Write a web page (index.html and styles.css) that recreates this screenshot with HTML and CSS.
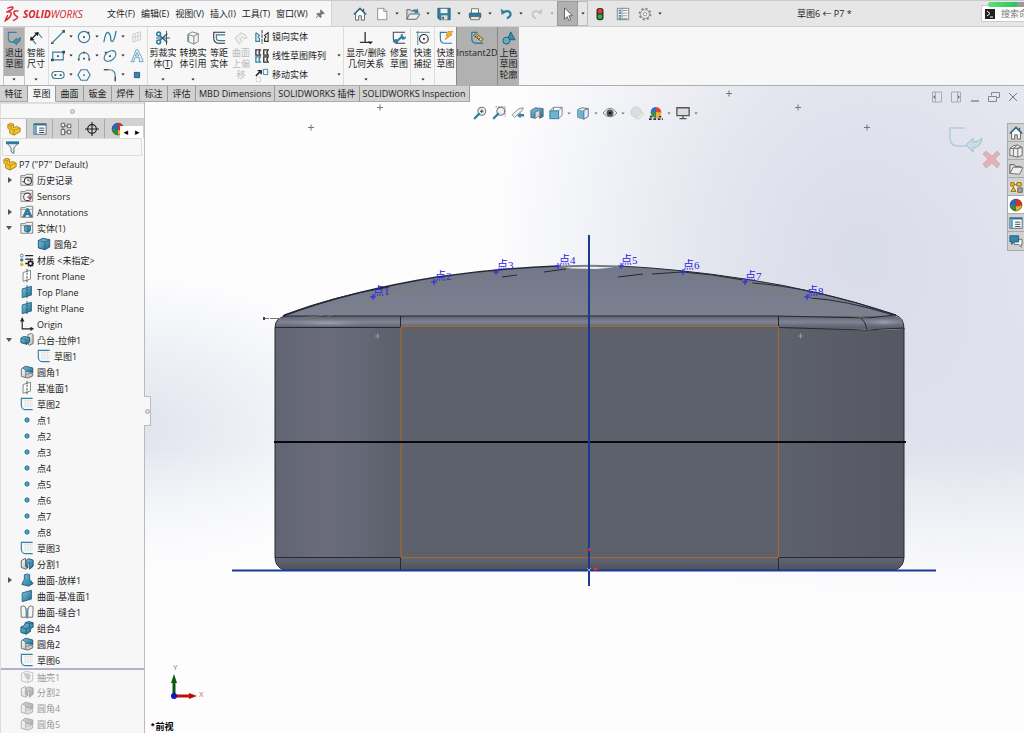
FILE: index.html
```html
<!DOCTYPE html>
<html lang="zh-CN">
<head>
<meta charset="utf-8">
<title>SOLIDWORKS - P7</title>
<link rel="stylesheet" href="styles.css">
</head>
<body>
<svg class="defs" aria-hidden="true">
  <defs>
    <linearGradient id="blue" x1="0" y1="0" x2="1" y2="1"><stop offset="0" stop-color="#7fc4de"/><stop offset="1" stop-color="#1d6c92"/></linearGradient>
    <linearGradient id="grey" x1="0" y1="0" x2="1" y2="1"><stop offset="0" stop-color="#fff"/><stop offset="1" stop-color="#b5b5b5"/></linearGradient>
  </defs>
  <symbol id="part" viewBox="0 0 16 16"><path d="M1 3l3-1.500 3.500 1v4L11 5l4 2v4l-7 4-5-2.500V9L1 7z" fill="#f4c52c" stroke="#a77a10"/><path d="M1 3l3.500 1.500 3-2M4.500 4.500V8L8 9.500l7-2.500M8 9.500V15" fill="none" stroke="#b98c18"/></symbol>
  <symbol id="folder" viewBox="0 0 16 16"><path d="M1 14V3h5l1-1.500h7.500V14z" fill="#f2f2f2" stroke="#777"/><path d="M1 5h13.500" stroke="#999"/></symbol>
  <symbol id="history" viewBox="0 0 16 16"><use href="#folder"/><circle cx="9" cy="9" r="4" fill="#fff" stroke="#333" stroke-width="1.300"/><path d="M9 6.500V9h2" fill="none" stroke="#333"/><path d="M2 9h4L4 11z" fill="#217aa3"/></symbol>
  <symbol id="sensor" viewBox="0 0 16 16"><use href="#folder"/><circle cx="8.500" cy="9" r="4.300" fill="#fff" stroke="#444" stroke-width="1.200"/><path d="M8 10l3-3" stroke="#333"/><circle cx="11" cy="10" r="1.500" fill="#d22"/></symbol>
  <symbol id="annot" viewBox="0 0 16 16"><use href="#folder"/><path d="M3 13.500L7.500 4h2L14 13.500h-3l-1-2.500H7l-1 2.500zM7.500 9.200h2L8.500 7z" fill="#2c7ea5" stroke="#195673" stroke-width=".5" fill-rule="evenodd"/></symbol>
  <symbol id="bodies" viewBox="0 0 16 16"><use href="#folder"/><path d="M5 6l3-1 4 1v5l-3 2-4-1.500z" fill="url(#blue)" stroke="#195673" stroke-width=".7"/><path d="M5 6l4 1v6M9 7l3-1" stroke="#195673" stroke-width=".6" fill="none"/></symbol>
  <symbol id="cube" viewBox="0 0 16 16"><path d="M1.500 4l5-2.500 8 1.500v8.500L9 14.500l-7.500-2z" fill="url(#blue)" stroke="#17536e"/><path d="M1.500 4L9 6v8.500M9 6l5.500-3" stroke="#17536e" stroke-width=".7" fill="none"/></symbol>
  <symbol id="material" viewBox="0 0 16 16"><circle cx="2" cy="3" r="1.700" fill="#fff" stroke="#666"/><circle cx="2" cy="8" r="2" fill="#3187ad"/><circle cx="2" cy="13" r="2" fill="#e4b21b"/><path d="M6 3h9M6 7h9M6 12h2" stroke="#222" stroke-width="1.700"/><circle cx="12" cy="12" r="2.500" fill="#fff" stroke="#222" stroke-width="2"/><path d="M12 7.500v9M7.500 12h9M9 9l6 6M15 9l-6 6" stroke="#222" stroke-dasharray="1.500 6" stroke-width="1.400"/></symbol>
  <symbol id="plane" viewBox="0 0 16 16"><path d="M3.500 4L12 1.500v10L3.500 14z" fill="#fff" stroke="#777"/><path d="M8 0v16" stroke="#444" stroke-dasharray="3 1"/></symbol>
  <symbol id="planeblue" viewBox="0 0 16 16"><path d="M2.500 4.500L13 1.500v10L2.500 14.500z" fill="url(#blue)" stroke="#205f7d"/><path d="M8 0v16" stroke="#1b4b63" stroke-dasharray="3 1"/></symbol>
  <symbol id="surface" viewBox="0 0 16 16"><path d="M2.500 4.500L13 1.500v10L2.500 14.500z" fill="url(#blue)" stroke="#205f7d"/></symbol>
  <symbol id="origin" viewBox="0 0 16 16"><path d="M2.500 3v10.500H13" fill="none" stroke="#222" stroke-width="1.300"/><path d="M2.500 0L0 5h5zM16 13.500L12 11v5z" fill="#222"/></symbol>
  <symbol id="extrude" viewBox="0 0 16 16"><path d="M9 2l4-1.500 2 1.500v10l-4 2-2-1.500z" fill="url(#grey)" stroke="#666"/><path d="M1 6l3-2 7 1v5l-3 3-7-2z" fill="url(#blue)" stroke="#17536e"/><path d="M1 6l6 1.500v5" fill="none" stroke="#17536e" stroke-width=".6"/></symbol>
  <symbol id="sketch" viewBox="0 0 16 16"><path d="M5 4h10M5 7h10M5 10h10M6 2v10M9 2v10M12 2v10" stroke="#ddd" stroke-width=".7"/><path d="M14.500 1.500H1.500V9c0 3 2 5.500 5 5.500h8" fill="none" stroke="#3281a6" stroke-width="1.300"/></symbol>
  <symbol id="fillet" viewBox="0 0 16 16"><path d="M1.500 4.500l5-3 8 2v9L9 15l-7.500-2z" fill="url(#grey)" stroke="#666"/><path d="M6.500 7.500Q7 5 3 3.500L6.500 1.500l8 2v5z" fill="url(#blue)" stroke="#1b5e7d" stroke-width=".8"/><path d="M6.500 7.500V14M6.500 11l8-2" stroke="#777" fill="none"/></symbol>
  <symbol id="dot" viewBox="0 0 16 16"><circle cx="8" cy="8" r="2.500" fill="#45a0c7" stroke="#195a7b" stroke-width=".8"/></symbol>
  <symbol id="split" viewBox="0 0 16 16"><path d="M1.500 4l5-2.500V11L9 12l-2 2-5.500-2z" fill="url(#grey)" stroke="#555"/><path d="M7 4l3-2 5 1.500v7L11 14V6L9 7v5l-2-1z" fill="url(#blue)" stroke="#17536e"/></symbol>
  <symbol id="loft" viewBox="0 0 16 16"><path d="M5 2l3-1 3 1v5l4 5-5 3-8-2 3-6z" fill="url(#blue)" stroke="#205f7d"/><path d="M5 2l4 1 2-1M9 3v6l1 6" fill="none" stroke="#4a9dbd" stroke-width=".5"/></symbol>
  <symbol id="knit" viewBox="0 0 16 16"><path d="M1 2q3-2 5 0l1 4v8H1.500zM15 2q-3-2-5 0L9 6v8h5.500z" fill="#f5f5f5" stroke="#666"/><path d="M8 4v11" stroke="#237ca6" stroke-width="2" stroke-dasharray="1 1"/></symbol>
  <symbol id="combine" viewBox="0 0 16 16"><path d="M6 2l4-1.500L15 2v5l-3 2v3l-5 3-6-2V7l4-2z" fill="url(#blue)" stroke="#17536e"/><path d="M1 7l6 2 4-2M7 9v6M6 2l5 1 4-1M11 3v5" fill="none" stroke="#17536e" stroke-width=".8"/></symbol>
  <symbol id="shell" viewBox="0 0 16 16"><path d="M1.500 4l5-2.500 8 1.500v9L9 14.500l-7.500-2z" fill="#eee" stroke="#888"/><path d="M5 4l6 1v5L7 9z" fill="#aaa" stroke="#888"/><path d="M9 6v8" stroke="#888"/></symbol>
  <symbol id="home" viewBox="0 0 16 16"><path d="M3 7v8h3.500v-5h3v5H13V7L8 2.500z" fill="#fff" stroke="#555"/><path d="M1 8.500l7-7 7 7" fill="none" stroke="#26698a" stroke-width="1.800"/><path d="M12 2v3" stroke="#555" stroke-width="1.500"/></symbol>
  <symbol id="ball" viewBox="0 0 16 16"><circle cx="8" cy="8" r="7" fill="#e3b31d"/><path d="M8 1a7 7 0 0 0-7 7q3 1.500 7 1z" fill="#2f62bf"/><path d="M8 1a7 7 0 0 1 7 7q-3 2-7 1z" fill="#d93025"/><path d="M1 8a7 7 0 0 0 7 7V9Q4 9.500 1 8z" fill="#25913b"/><circle cx="8" cy="8" r="6.800" fill="none" stroke="#444" stroke-width=".6"/></symbol>
  <symbol id="props" viewBox="0 0 16 16"><rect x="1" y="2" width="14" height="12" fill="#fff" stroke="#446779"/><path d="M1 3h14" stroke="#287497" stroke-width="2"/><path d="M3 4v10" stroke="#5fa5c3" stroke-width="3"/><path d="M7 7h6M7 9.500h6M7 12h6" stroke="#333"/></symbol>
  <symbol id="magnify" viewBox="0 0 16 16"><circle cx="10" cy="6" r="4.500" fill="#e7f1f5" stroke="#777" stroke-width="1.200"/><path d="M7 9l-5 5" stroke="#347f9f" stroke-width="2.600" stroke-linecap="round"/></symbol>
  <symbol id="arrow" viewBox="0 0 6 4"><path d="M0.500 0.500h5L3 3.500z" fill="currentColor"/></symbol>
</svg>

<div class="app">
  <header class="topbar">
    <div class="brand-area">
      <svg class="logo" viewBox="0 0 16 18" fill="none" stroke="#d8232e" stroke-width="1.500"><path d="M3 3.500Q9 1 9 3T2 7.500Q8 6.500 7 10T1 16.500L3.500 10.500M15 6.500Q10 5.500 10 8t3 4-4 4.500"/></svg>
      <div class="brand"><b>SOLID</b>WORKS</div>
      <nav class="menu">
        <button>文件(F)</button><button>编辑(E)</button><button>视图(V)</button><button>插入(I)</button><button>工具(T)</button><button>窗口(W)</button>
      </nav>
      <svg class="pin" viewBox="0 0 12 12"><path d="M7 1l4 4-1 1-1-.5-2 2 .5 2-1 1L2 6l1-1 2 .5 2-2-.5-1zM4 8l-3 3" fill="#777" stroke="#777"/></svg>
    </div>
    <div class="quick">
      <button class="home" aria-label="主页"><svg class="i16"><use href="#home"/></svg></button>
      <button class="drop" aria-label="新建"><svg class="i16" viewBox="0 0 16 16"><path d="M3 1.500h7l3.500 3.500v9.500H3z" fill="#fcfcfc" stroke="#888"/><path d="M10 1.500V5h3.500" fill="none" stroke="#888"/></svg><svg class="ar"><use href="#arrow"/></svg></button>
      <button class="drop" aria-label="打开"><svg class="i16" viewBox="0 0 16 16"><path d="M1 14V3h4l1 1.500h7V7" fill="#ddd" stroke="#555"/><path d="M1 14L4 8h12l-4 6z" fill="#eee" stroke="#555"/><path d="M7 6q1-5 5-3l1-1.500 1.500 5-5 .5 1-2q-2-1-3.500 1z" fill="#2c7da2"/></svg><svg class="ar"><use href="#arrow"/></svg></button>
      <button class="drop" aria-label="保存"><svg class="i16" viewBox="0 0 16 16"><path d="M1 1.500h14v13H3L1 12.500z" fill="#357f9f" stroke="#215970"/><path d="M4 2h8v5H4z" fill="#f1f1f1"/><path d="M5 9.500h7v5H5z" fill="#ddd"/><path d="M6 11h2v3H6z" fill="#555"/></svg><svg class="ar"><use href="#arrow"/></svg></button>
      <button class="drop" aria-label="打印"><svg class="i16" viewBox="0 0 16 16"><path d="M4 7V2h8v5" fill="#fff" stroke="#666"/><path d="M1.500 7h13v5h-13z" fill="#347c9e" stroke="#225b75"/><path d="M3 11h10v3.500H3z" fill="#eee" stroke="#666"/></svg><svg class="ar"><use href="#arrow"/></svg></button>
      <button class="drop" aria-label="撤消"><svg class="i16" viewBox="0 0 16 16"><path d="M5 6q6-3 8 1 1 4-4 6" fill="none" stroke="#347f9f" stroke-width="2.600"/><path d="M2 2l1 7 5-3z" fill="#347f9f"/></svg><svg class="ar"><use href="#arrow"/></svg></button>
      <button class="drop dim" aria-label="重做" disabled><svg class="i16" viewBox="0 0 16 16"><path d="M11 6Q5 3 3 7q-1 4 4 6" fill="none" stroke="#c5c5c5" stroke-width="2"/><path d="M14 2l-1 7-5-3z" fill="#c5c5c5"/></svg><svg class="ar"><use href="#arrow"/></svg></button>
      <button class="select" aria-label="选择"><svg class="i16" viewBox="0 0 16 16"><path d="M4 1l9 9H9l2 4.500-2 1L7 11l-3 3z" fill="#fff" stroke="#555"/></svg></button>
      <button class="selectdrop" aria-label="选择方式"><svg class="ar"><use href="#arrow"/></svg></button>
      <button class="wide" aria-label="重建模型"><svg class="i16" viewBox="0 0 16 16"><rect x="4" y="1" width="8" height="14" rx="3" fill="#333"/><circle cx="8" cy="4.800" r="2.700" fill="#e03b30"/><circle cx="8" cy="11" r="2.700" fill="#2eb44a"/></svg></button>
      <button class="wide" aria-label="文件属性"><svg class="i16" viewBox="0 0 16 16"><path d="M1.500 1.500h13v13h-13z" fill="#fff" stroke="#777"/><path d="M4.500 3v11" stroke="#3a86aa" stroke-width="3" stroke-dasharray="2 1"/><path d="M8 4h5M8 7h5M8 10h5M8 13h5M7 1.500v13" stroke="#888"/></svg></button>
      <button class="drop gear" aria-label="选项"><svg class="i16" viewBox="0 0 16 16"><circle cx="8" cy="8" r="6.300" fill="none" stroke="#888" stroke-width="2" stroke-dasharray="2.500 2.400"/><circle cx="8" cy="8" r="5" fill="#eee" stroke="#888"/><circle cx="8" cy="8" r="2" fill="#fff" stroke="#888"/></svg><svg class="ar"><use href="#arrow"/></svg></button>
    </div>
    <h1 class="title">草图6 ← P7 *</h1>
    <div class="searchwrap"><div class="progress"></div><label class="search"><svg viewBox="0 0 10 10"><path d="M0 0h10v10H0z" fill="#222"/><path d="M2 2l3 2.500L2 7M5 8h3" stroke="#fff" fill="none"/></svg><input type="text" placeholder="搜索命令" aria-label="搜索命令"></label></div>
  </header>

  <section class="ribbon">
    <button class="tool w22 exit"><svg class="i16" viewBox="0 0 16 16"><path d="M11 1.500H1.500V8q0 5 5 5H8" fill="none" stroke="#347f9f" stroke-width="1.300"/><path d="M7 12l4-4v2q3 0 4-3 1 6-4 7v2z" fill="#3f91b4" stroke="#246783" stroke-width=".7"/></svg><span>退出<br>草图</span><svg class="ar"><use href="#arrow"/></svg></button>
    <button class="tool w22"><svg class="i16" viewBox="0 0 16 16"><path d="M3 9l5 6M10 2l5 6" stroke="#347f9f" stroke-width="1.300"/><path d="M2 10L10 2" stroke="#222" stroke-width="1.500"/><path d="M1 11l1-5 4 4zM11 1L6 2l4 4z" fill="#222"/></svg><span>智能<br>尺寸</span><svg class="ar"><use href="#arrow"/></svg></button>
    <div class="shapes">
      <button aria-label="直线"><svg class="i16" viewBox="0 0 16 16"><path d="M2 14L14 2" stroke="#347f9f" stroke-width="1.300"/><path d="M0 14h3v2H0zM13 0h3v3h-3z" fill="#555"/></svg><svg class="ar"><use href="#arrow"/></svg></button>
      <button aria-label="圆"><svg class="i16" viewBox="0 0 16 16"><circle cx="8" cy="8" r="6.500" fill="none" stroke="#347f9f" stroke-width="1.300"/><path d="M7 7h2v2H7zM12 2h2v2h-2z" fill="#444"/></svg><svg class="ar"><use href="#arrow"/></svg></button>
      <button aria-label="样条曲线"><svg class="i16" viewBox="0 0 16 16"><path d="M1 14Q3 1 6 3t3 9q3 5 6-11" fill="none" stroke="#347f9f" stroke-width="1.500"/></svg><svg class="ar"><use href="#arrow"/></svg></button>
      <button aria-label="基准面" disabled><svg class="i16" viewBox="0 0 16 16"><path d="M3 5l9-3v9l-9 3zM3 9l9-3M6 4v9M9 3v9" fill="none" stroke="#ccc"/></svg></button>
      <button aria-label="矩形"><svg class="i16" viewBox="0 0 16 16"><path d="M2 3.500h12v9H2z" fill="none" stroke="#347f9f" stroke-width="1.300"/><path d="M0 11h3v3H0zM13 2h3v3h-3zM7 7h2v2H7z" fill="#444"/></svg><svg class="ar"><use href="#arrow"/></svg></button>
      <button aria-label="圆弧"><svg class="i16" viewBox="0 0 16 16"><path d="M2 12q0-8 6-8t6 8" fill="none" stroke="#347f9f" stroke-width="1.400"/><path d="M1 11h2v2H1zM13 11h2v2h-2zM7 10h2v2H7zM7 3h2v2H7z" fill="#444"/></svg><svg class="ar"><use href="#arrow"/></svg></button>
      <button aria-label="椭圆"><svg class="i16" viewBox="0 0 16 16"><ellipse cx="8" cy="8" rx="7.500" ry="5" transform="rotate(-38 8 8)" fill="none" stroke="#347f9f" stroke-width="1.300"/><path d="M7 7h2v2H7zM2 3h2v2H2z" fill="#444"/></svg><svg class="ar"><use href="#arrow"/></svg></button>
      <button aria-label="文字"><svg class="i16" viewBox="0 0 16 16"><path d="M1 14.500h4v-1L4.500 13l1-3h5l1 3-1 .5v1H15v-1L9 1H7L2 13.500zM6 8l2-4 2 4z" fill="#eef8fb" stroke="#5c9ebc" fill-rule="evenodd"/></svg></button>
      <button aria-label="槽口"><svg class="i16" viewBox="0 0 16 16"><rect x="1" y="4" width="14" height="8" rx="4" fill="none" stroke="#347f9f" stroke-width="1.300"/><path d="M4 7h2v2H4zM10 7h2v2h-2z" fill="#444"/></svg><svg class="ar"><use href="#arrow"/></svg></button>
      <button aria-label="多边形"><svg class="i16" viewBox="0 0 16 16"><path d="M4.500 2h7L15 8l-3.500 6h-7L1 8z" fill="none" stroke="#347f9f" stroke-width="1.300"/><path d="M7 7h2v2H7z" fill="#777"/></svg></button>
      <button aria-label="圆角"><svg class="i16" viewBox="0 0 16 16"><path d="M1 2h6q7 0 7 7v6" fill="none" stroke="#347f9f" stroke-width="1.300"/><path d="M1 2h5M14 10v5" stroke="#444" stroke-width="1.300"/></svg><svg class="ar"><use href="#arrow"/></svg></button>
      <button aria-label="点"><svg class="i16" viewBox="0 0 16 16"><path d="M5 5h6v6H5z" fill="#3488ad" stroke="#195673"/></svg></button>
    </div>
    <button class="tool w30"><svg class="i16" viewBox="0 0 16 16"><path d="M4 5l9 8M4 11l9-8" stroke="#287da4" stroke-width="1.600"/><path d="M0 8h16M12 0v16" stroke="#444"/><circle cx="3" cy="3.500" r="2.200" fill="#fff" stroke="#287da4" stroke-width="1.800"/><circle cx="3" cy="12.500" r="2.200" fill="#fff" stroke="#287da4" stroke-width="1.800"/></svg><span>剪裁实<br>体(<u>T</u>)</span><svg class="ar"><use href="#arrow"/></svg></button>
    <button class="tool w30"><svg class="i16" viewBox="0 0 16 16"><path d="M2 4l5-3 7 2v9l-5 3-7-3z" fill="#f4f4f4" stroke="#777"/><path d="M2 4l7 2v9M9 6l5-3" fill="none" stroke="#777"/><path d="M3 5v7" stroke="#3988aa"/></svg><span>转换实<br>体引用</span><svg class="ar"><use href="#arrow"/></svg></button>
    <button class="tool w22"><svg class="i16" viewBox="0 0 16 16"><path d="M15 1.500H2V8q0 6 6 6h7" fill="none" stroke="#333" stroke-width="1.200"/><path d="M15 4.500H5V8q0 3 4 3h6" fill="none" stroke="#347f9f" stroke-width="1.300"/></svg><span>等距<br>实体</span></button>
    <button class="tool w22" disabled><svg class="i16" viewBox="0 0 16 16"><path d="M1 8l7-6q5 1 7 6l-4 1q-1-2-2-2l-2 2 2 3-3 3z" fill="#eee" stroke="#c5c5c5"/></svg><span>曲面<br>上偏<br>移</span></button>
    <div class="list">
      <button><svg class="i16" viewBox="0 0 16 16"><path d="M1 3v10h4v-3L3.500 8 5 6 1 3" fill="none" stroke="#347f9f" stroke-width="1.400"/><path d="M8 0v16" stroke="#222" stroke-dasharray="4 1"/><path d="M15 3v10h-4v-3L12.500 8 11 6z" stroke="#333" fill="none" stroke-width="1.300"/></svg><span>镜向实体</span></button>
      <button><svg class="i16" viewBox="0 0 16 16"><path d="M1 1h5L4.500 4 6 7H1zM10 1h5l-1.500 3L15 7h-5zM10 9h5l-1.500 3 1.500 3h-5z" fill="none" stroke="#333" stroke-width="1.500"/><path d="M1 9h5l-1.500 3L6 15H1z" fill="none" stroke="#347f9f" stroke-width="1.500"/></svg><span>线性草图阵列</span><svg class="ar"><use href="#arrow"/></svg></button>
      <button><svg class="i16" viewBox="0 0 16 16"><path d="M1 9l5-5M3 3h4v4" fill="none" stroke="#222" stroke-width="1.700"/><path d="M9.500 1.500h5v6h-5z" fill="#edf8fc" stroke="#347f9f"/><path d="M1.500 10.500h5v5h-5z" fill="#fff" stroke="#ccc"/></svg><span>移动实体</span><svg class="ar"><use href="#arrow"/></svg></button>
    </div>
    <button class="tool w44"><svg class="i16" viewBox="0 0 16 16"><path d="M7 1v12M1 13h11" stroke="#333" stroke-width="1.500"/><path d="M10 12h6l-3 3z" fill="#222"/></svg><span>显示/删除<br>几何关系</span><svg class="ar"><use href="#arrow"/></svg></button>
    <button class="tool w22"><svg class="i16" viewBox="0 0 16 16"><path d="M15 1.500H1.500V8q0 6 5 6H15" fill="none" stroke="#444" stroke-width="1.200"/><path d="M5 12l6-5" stroke="#347f9f" stroke-width="2.400"/><path d="M10 7q-1-4 3-4l-1 2 2 2 2-1q0 4-4 4zM7 11q1 4-3 4l1-2-2-1-2 1q0-4 4-4z" fill="#347f9f"/></svg><span>修复<br>草图</span></button>
    <button class="tool w24 rule"><svg class="i16" viewBox="0 0 16 16"><path d="M2 0v16M0 1.500h16" stroke="#347f9f"/><circle cx="9" cy="9" r="5" fill="none" stroke="#333" stroke-width="1.300"/><path d="M8 8h2v2H8z" fill="#333"/></svg><span>快速<br>捕捉</span><svg class="ar"><use href="#arrow"/></svg></button>
    <button class="tool w22 rule"><svg class="i16" viewBox="0 0 16 16"><path d="M9 1.500H1.500V8q0 6 5 6H15" fill="none" stroke="#347f9f" stroke-width="1.300"/><path d="M11 0h5l-3 4h2l-8 6 3-5H8z" fill="#f3b532" stroke="#cc751d" stroke-width=".7"/></svg><span>快速<br>草图</span></button>
    <button class="tool w41 on"><svg class="i16" viewBox="0 0 16 16"><path d="M9 1.500H2V8q0 6 5 6h8" fill="none" stroke="#347f9f" stroke-width="1.500"/><path d="M4 5l3-2 8 6-2 3z" fill="#f3c63e" stroke="#555"/><path d="M7 5l-1 2M9 6L8 8M11 8l-1 2" stroke="#333"/></svg><span>Instant2D</span></button>
    <button class="tool w22 on"><svg class="i16" viewBox="0 0 16 16"><path d="M10 1l5 9H6z" fill="#398caf" stroke="#1c5875"/><circle cx="5" cy="11" r="4" fill="#62acc9" stroke="#1c5875"/></svg><span>上色<br>草图<br>轮廓</span></button>
  </section>

  <main class="work">
    <div class="canvas">
      <svg class="scene" viewBox="0 86 1024 647" role="img" aria-label="前视图模型">
        <defs>
          <linearGradient id="dome" x1="0" y1="0" x2="0" y2="1"><stop offset="0" stop-color="#737889"/><stop offset="1" stop-color="#7c8191"/></linearGradient>
          <linearGradient id="band" x1="0" y1="0" x2="0" y2="1"><stop offset="0" stop-color="#5d606f"/><stop offset=".45" stop-color="#7f8393"/><stop offset="1" stop-color="#565965"/></linearGradient>
          <linearGradient id="foot" x1="0" y1="0" x2="0" y2="1"><stop offset="0" stop-color="#636774"/><stop offset="1" stop-color="#4e505e"/></linearGradient>
          <linearGradient id="lside"><stop offset="0" stop-color="#616472"/><stop offset=".4" stop-color="#6a6c7b"/><stop offset=".65" stop-color="#656876"/><stop offset="1" stop-color="#5b5f6a"/></linearGradient>
          <linearGradient id="rside"><stop offset="0" stop-color="#5d616c"/><stop offset="1" stop-color="#555763"/></linearGradient>
          <radialGradient id="gleam"><stop offset="0" stop-color="#a0a3b1"/><stop offset="1" stop-color="#7f8393" stop-opacity="0"/></radialGradient>
        </defs>
        <path d="M283 316Q350 291 437 277Q515 266 590 265.500Q665 266 745 279Q820 290 896 315V318H283z" fill="url(#dome)"/>
        <path d="M275 328Q275 317 287 316H895Q904 318 904 329z" fill="url(#band)"/>
        <ellipse cx="327" cy="323" rx="46" ry="4" fill="url(#gleam)"/><ellipse cx="884" cy="322" rx="18" ry="4" fill="url(#gleam)"/>
        <path d="M275 327h126v230H275z" fill="url(#lside)"/><path d="M401 327h378v230H401z" fill="#5d616c"/><path d="M779 327l88 3 37-1v228H779z" fill="url(#rside)"/>
        <path d="M275 557h629q0 9-9 13H284q-9-4-9-13z" fill="url(#foot)"/>
        <path d="M564 267.500q25-1.500 50 0l-18 1.500-24-.5z" fill="#eceded"/>
        <g fill="none" stroke="#262933">
          <path d="M283 316Q350 291 437 277Q500 268 558 266" stroke-width="1.400"/>
          <path d="M558 266Q590 264.500 620 266" stroke="#77797a"/>
          <path d="M620 266Q680 269 745 279Q820 290 896 315"/>
          <path d="M275 328v229q0 10 9 13M904 328v229q0 10-9 13M275 328q0-11 12-12h491l89 2 28-3q9 2 9 14M275 327.500h126M400.500 316v12M400.500 557v13M275 557.500h126M778.500 316v12M778 327.500l88 2.500 38-2M778.500 557v13M778 557.500h126M861 318q5 4 6 12"/>
          <path d="M284 315q50-19 105-28M752 283q60 4 144 32M810 298q35 2 83 17M502 277l15-2M544 272l22-3M618 277l25-3M652 274l30-2M682 272q31 2 61 8"/>
        </g>
        <path d="M301 318q35-2 72-21M327 317q39-15 107-35M374 297q35-4 60-15 39-1 62-10M683 272q25 12 62 10M745 282q30 16 62 15M807 297q23 16 62 22M745 282q68 14 117 35" fill="none" stroke="#85826f" stroke-width=".6"/>
        <path d="M401 557.500V326.500h377.500v231z" fill="none" stroke="#ad6824"/>
        <path d="M274 442h632" stroke="#08090b" stroke-width="2"/>
        <path d="M232 570.500h704M589 235v351" stroke="#183a91" stroke-width="2"/>
        <path d="M263 318.500h6m1 0h11" stroke="#777"/><path d="M263 317h2v3h-2z" fill="#444"/>
        <path d="M588 551l1.500-4 2 4zM594 567l5 2-5 2z" fill="#f02b35"/><path d="M587 568l4 4m0-4l-4 4" stroke="#ccd" stroke-width=".7"/>
        <path class="cross" d="M377 107.500h6m-3-3v6M308 127.500h6m-3-3v6M726 93.500h6m-3-3v6M795 107.500h6m-3-3v6M864 127.500h6m-3-3v6"/>
        <path d="M375 336h5m-2.500-2.500v5M798 336h5m-2.500-2.500v5" stroke="#9699a1" fill="none"/>
        <path d="M370 297h6m-3-3v6M431 282h6m-3-3v6M493 272h6m-3-3v6M555 266h6m-3-3v6M618 266h6m-3-3v6M680 272h6m-3-3v6M742 282h6m-3-3v6M804 297h6m-3-3v6" stroke="#2522e6" fill="none"/>
        <g class="points"><text x="373" y="295">点1</text><text x="435" y="280">点2</text><text x="497" y="269">点3</text><text x="559" y="264">点4</text><text x="621" y="264">点5</text><text x="683" y="269">点6</text><text x="745" y="280">点7</text><text x="807" y="295">点8</text></g>
        <path d="M174 696v-14" stroke="#075a0e" stroke-width="3"/><path d="M171 683l3-9 3 9z" fill="#075a0e"/><path d="M175 696h15" stroke="#bd0d0d" stroke-width="3"/><path d="M189 693l8 3-8 3z" fill="#bd0d0d"/><circle cx="174" cy="696" r="3" fill="#1515c5"/>
        <text class="axis y" x="173" y="670">Y</text><text class="axis x" x="199" y="697">X</text>
        <text class="view" x="150" y="730">*前视</text>
        <g opacity=".55"><path d="M965 128h-15v10q0 8 8 8h8" fill="none" stroke="#8fbad0" stroke-width="1.500"/><path d="M966 145l7-7v4q6 0 9-4-1 9-9 10v4z" fill="#b6d5e3" stroke="#739eae"/><path d="M983 154l3-3 6 5 5-5 3 3-5 5 5 5-3 4-5-5-6 5-3-4 5-5z" fill="#e78589" stroke="#c08b8f"/></g>
      </svg>
    </div>
    <nav class="tabs">
      <button>特征</button><button class="active">草图</button><button>曲面</button><button>钣金</button><button>焊件</button><button>标注</button><button>评估</button><button>MBD Dimensions</button><button>SOLIDWORKS 插件</button><button>SOLIDWORKS Inspection</button>
    </nav>

    <aside class="side">
      <div class="grip"><i></i></div>
      <div class="sidetabs">
        <button class="active" aria-label="特征树"><svg class="i16"><use href="#part"/></svg></button>
        <button aria-label="属性"><svg class="i16"><use href="#props"/></svg></button>
        <button aria-label="配置"><svg class="i16" viewBox="0 0 16 16"><path d="M2.500 1.500h4v4h-4zM2.500 8.500h4v6h-4zM9.500 2.500h4v4h-4zM9.500 9.500h4v4h-4zM4.500 5.500v3M6.500 11.500h3M6.500 4.500h3" fill="#ededed" stroke="#555"/></svg></button>
        <button aria-label="尺寸"><svg class="i16" viewBox="0 0 16 16"><circle cx="8" cy="8" r="5" fill="none" stroke="#222" stroke-width="1.300"/><path d="M8 0v16M0 8h16" stroke="#222" stroke-width="1.300"/></svg></button>
        <button class="last" aria-label="显示"><svg class="i16"><use href="#ball"/></svg></button>
        <div class="scroll"><button aria-label="向左">◂</button><button aria-label="向右">▸</button></div>
      </div>
      <label class="filter"><svg viewBox="0 0 16 16"><path d="M1.500 2.500h13l-5 6v6l-3-2v-4z" fill="#f0f0f0" stroke="#54707d"/><path d="M1 3h14" stroke="#277b9d" stroke-width="3"/></svg><input type="text" aria-label="过滤"></label>
      <ul class="tree">
        <li class="root"><svg class="i16"><use href="#part"/></svg>P7 ("P7" Default)</li>
        <li class="closed"><svg class="i16"><use href="#history"/></svg>历史记录</li>
        <li><svg class="i16"><use href="#sensor"/></svg>Sensors</li>
        <li class="closed"><svg class="i16"><use href="#annot"/></svg>Annotations</li>
        <li class="open"><svg class="i16"><use href="#bodies"/></svg>实体(1)</li>
        <li class="child"><svg class="i16"><use href="#cube"/></svg>圆角2</li>
        <li><svg class="i16"><use href="#material"/></svg>材质 &lt;未指定&gt;</li>
        <li><svg class="i16"><use href="#plane"/></svg>Front Plane</li>
        <li><svg class="i16"><use href="#planeblue"/></svg>Top Plane</li>
        <li><svg class="i16"><use href="#planeblue"/></svg>Right Plane</li>
        <li><svg class="i16"><use href="#origin"/></svg>Origin</li>
        <li class="open"><svg class="i16"><use href="#extrude"/></svg>凸台-拉伸1</li>
        <li class="child"><svg class="i16"><use href="#sketch"/></svg>草图1</li>
        <li><svg class="i16"><use href="#fillet"/></svg>圆角1</li>
        <li><svg class="i16"><use href="#plane"/></svg>基准面1</li>
        <li><svg class="i16"><use href="#sketch"/></svg>草图2</li>
        <li><svg class="i16"><use href="#dot"/></svg>点1</li>
        <li><svg class="i16"><use href="#dot"/></svg>点2</li>
        <li><svg class="i16"><use href="#dot"/></svg>点3</li>
        <li><svg class="i16"><use href="#dot"/></svg>点4</li>
        <li><svg class="i16"><use href="#dot"/></svg>点5</li>
        <li><svg class="i16"><use href="#dot"/></svg>点6</li>
        <li><svg class="i16"><use href="#dot"/></svg>点7</li>
        <li><svg class="i16"><use href="#dot"/></svg>点8</li>
        <li><svg class="i16"><use href="#sketch"/></svg>草图3</li>
        <li><svg class="i16"><use href="#split"/></svg>分割1</li>
        <li class="closed"><svg class="i16"><use href="#loft"/></svg>曲面-放样1</li>
        <li><svg class="i16"><use href="#surface"/></svg>曲面-基准面1</li>
        <li><svg class="i16"><use href="#knit"/></svg>曲面-缝合1</li>
        <li><svg class="i16"><use href="#combine"/></svg>组合4</li>
        <li><svg class="i16"><use href="#fillet"/></svg>圆角2</li>
        <li><svg class="i16"><use href="#sketch"/></svg>草图6</li>
        <li class="off rollback"><svg class="i16"><use href="#shell"/></svg>抽壳1</li>
        <li class="off"><svg class="i16"><use href="#split"/></svg>分割2</li>
        <li class="off"><svg class="i16"><use href="#fillet"/></svg>圆角4</li>
        <li class="off"><svg class="i16"><use href="#fillet"/></svg>圆角5</li>
      </ul>
      <div class="handle"><i></i></div>
    </aside>

    <div class="hud">
      <button aria-label="整屏显示"><svg class="i16" viewBox="0 0 16 16"><use href="#magnify"/><path d="M8 6h4m-2-2v4" stroke="#333"/></svg></button>
      <button aria-label="局部放大"><svg class="i16" viewBox="0 0 16 16"><use href="#magnify"/><path d="M4 1h11v11" fill="none" stroke="#777" stroke-dasharray="2 1"/></svg></button>
      <button aria-label="上一视图"><svg class="i16" viewBox="0 0 16 16"><path d="M1 10l8-7 5-1-1 3-9 8z" fill="#eee" stroke="#888"/><path d="M15 9v3h-4v2l-4-3 4-4v2z" fill="#3686a9"/></svg></button>
      <button aria-label="剖面"><svg class="i16" viewBox="0 0 16 16"><path d="M1 5l5-3 9 1v9l-4 2V6L6 7v7l-5-1z" fill="url(#blue)" stroke="#567"/><path d="M6 7l5-2v6l-5 3z" fill="#ddd" stroke="#888"/></svg></button>
      <button class="drop" aria-label="视图定向"><svg class="i16" viewBox="0 0 16 16"><path d="M5 1.500h10v9M1 5.500l4-4m6 4l4-4M11 14.500l4-4M5 1.500v4" fill="none" stroke="#777"/><path d="M1 5.500h10v9H1z" fill="#6fb3d0" stroke="#27779a"/></svg><svg class="ar"><use href="#arrow"/></svg></button>
      <button class="drop" aria-label="显示样式"><svg class="i16" viewBox="0 0 16 16"><path d="M2 4l5-2 7 1v9l-5 3-7-2z" fill="#e3f0f6" stroke="#567"/><path d="M2 4l7 1v10l-7-2z" fill="#6fb3d0"/><path d="M9 5l5-2M9 5v10" stroke="#567"/></svg><svg class="ar"><use href="#arrow"/></svg></button>
      <button class="drop" aria-label="隐藏/显示"><svg class="i16" viewBox="0 0 16 16"><path d="M0 8q8-11 16 0-8 9-16 0z" fill="#eee" stroke="#777"/><circle cx="8" cy="8" r="4" fill="#555"/><circle cx="8" cy="8" r="1.500" fill="#111"/></svg><svg class="ar"><use href="#arrow"/></svg></button>
      <button aria-label="编辑外观" disabled><svg class="i16" viewBox="0 0 16 16"><circle cx="7" cy="7" r="6" fill="#ddd" stroke="#ccc"/><path d="M7 14l7-7 2 2-6 6z" fill="#eee" stroke="#ccc"/></svg></button>
      <button class="drop" aria-label="应用布景"><svg class="i16" viewBox="0 0 16 16"><path d="M2 10h12l2 6H0z" fill="#ddd"/><path d="M1 12h14M0 15h16" stroke="#333" stroke-width="2" stroke-dasharray="3 2"/><circle cx="8" cy="7" r="6" fill="#d44"/><path d="M8 1a6 6 0 0 0-6 6h6z" fill="#356dc0"/><path d="M2 7a6 6 0 0 0 6 6V7z" fill="#2a9a4a"/><path d="M8 7h6a6 6 0 0 1-6 6z" fill="#e7b82d"/></svg><svg class="ar"><use href="#arrow"/></svg></button>
      <button class="drop" aria-label="视图设定"><svg class="i16" viewBox="0 0 16 16"><path d="M1 2h14v9H1z" fill="#ddd" stroke="#555" stroke-width="1.500"/><path d="M8 11v3M4 14.500h8" stroke="#555" stroke-width="1.500"/></svg><svg class="ar"><use href="#arrow"/></svg></button>
    </div>
    <div class="wincontrols">
      <button aria-label="左"><svg viewBox="0 0 12 12"><path d="M1.500 1h9v10h-9zM4.500 1v10" fill="none" stroke="#aaa"/><path d="M4 4v4L2 6z" fill="#777"/></svg></button><button aria-label="右"><svg viewBox="0 0 12 12"><path d="M1.500 1h9v10h-9zM7.500 1v10" fill="none" stroke="#aaa"/><path d="M8 4v4l2-2z" fill="#777"/></svg></button><button aria-label="最小化"><svg viewBox="0 0 12 12"><path d="M2 10h8" stroke="#888" stroke-width="1.500"/></svg></button><button aria-label="还原"><svg viewBox="0 0 12 12"><path d="M3.500 4.500v-3h8v5h-3M.5 5.500h8v5h-8z" fill="none" stroke="#888"/></svg></button><button aria-label="关闭"><svg viewBox="0 0 12 12"><path d="M2 2l8 8m0-8l-8 8" stroke="#777"/></svg></button>
    </div>
    <div class="taskpane">
      <button aria-label="资源"><svg class="i16"><use href="#home"/></svg></button>
      <button aria-label="设计库"><svg class="i16" viewBox="0 0 16 16"><path d="M1 5l4-3 5-1 5 3v9l-5 2-5-1-4-1zM5 5v9M10 5v10M1 5l4 0 5 0 5-1M5 5l4-3M10 5l3-2" fill="#eee" stroke="#666"/></svg></button>
      <button aria-label="文件"><svg class="i16" viewBox="0 0 16 16"><path d="M1 13V3h5l1 2h6v2" fill="#ddd" stroke="#555"/><path d="M1 13l4-7h11l-4 8z" fill="#eee" stroke="#666"/></svg></button>
      <button aria-label="视图"><svg class="i16" viewBox="0 0 16 16"><path d="M1 2h14v12H1z" fill="#eee"/><path d="M2 3h4v4H2zM9 3h5v4H9zM2 13l3-5 3 5zM6 5h3" fill="#f3c429" stroke="#7a6618"/><path d="M10 9h5v5h-5z" fill="#aaa" stroke="#555"/></svg></button>
      <button class="active" aria-label="外观"><svg class="i16"><use href="#ball"/></svg></button>
      <button aria-label="自定义属性"><svg class="i16"><use href="#props"/></svg></button>
      <button aria-label="论坛"><svg class="i16" viewBox="0 0 16 16"><path d="M6 6h9v6h-1v3l-3-3H6z" fill="#eee" stroke="#666"/><path d="M1 2h10v7H6l-3 3V9H1z" fill="#3186ab" stroke="#205f7c"/></svg></button>
    </div>
  </main>
</div>
</body>
</html>
```

FILE: styles.css
```css
* { box-sizing: border-box; }
html, body { height: 100%; }
body { margin: 0; overflow: hidden; font: 9px/11px "Open Sans", "Noto Sans CJK SC", sans-serif; color: #222; }
button { appearance: none; border: 0; margin: 0; padding: 0; background: transparent; font: inherit; color: inherit; display: flex; align-items: center; justify-content: center; white-space: nowrap; }
button:disabled { color: #bbb; }
input { font: inherit; border: 0; padding: 0; background: transparent; outline: 0; min-width: 0; }
svg { display: block; flex: none; }
.defs { position: absolute; width: 0; height: 0; }
.i16 { width: 14px; height: 14px; }
.ar { width: 4px; height: 3px; }
.app { height: 100vh; display: flex; flex-direction: column; }

.topbar { height: 27px; flex: none; display: flex; background: #e6e6e6; border-top: 1px solid #c9c9c9; border-bottom: 1px solid #d0d0d0; }
.brand-area { width: 332px; flex: none; display: flex; align-items: center; background: #f7f7f7; border-right: 1px solid #d5d5d5; padding-left: 4px; }
.logo { width: 16px; height: 17px; }
.brand { width: 87px; padding-left: 3px; color: #d8232e; font: italic 10px/14px "Open Sans", sans-serif; }
.menu { display: flex; gap: 6px; }
.pin { width: 10px; height: 10px; margin-left: 7px; }
.quick { display: flex; align-items: stretch; padding-left: 20px; }
.quick button { width: 15px; }
.quick .home { margin-right: 7px; }
.quick .drop { width: 31px; justify-content: flex-start; gap: 6px; padding-left: 1px; }
.quick .dim { width: 28px; color: #999; }
.quick .gear { margin-left: 3px; }
.quick .select { width: 21px; background: #b1b1b1; border: 1px solid #999; }
.quick .selectdrop { width: 10px; border: 1px solid #bbb; border-left: 0; }
.quick .wide { width: 23px; }
.title { margin: 0 0 0 129px; font: inherit; line-height: 26px; }
.searchwrap { margin-left: auto; width: 43px; padding-top: 4px; position: relative; }
.search { display: flex; align-items: center; gap: 6px; height: 17px; background: #fff; border: 1px solid #ccc; border-right: 0; padding-left: 3px; overflow: hidden; }
.search svg { width: 10px; height: 10px; }
.search input { width: 40px; flex: none; }
.search input::placeholder { color: #777; }
.progress { position: absolute; top: 1px; right: 0; left: 7px; height: 5px; border-radius: 3px 0 0 3px; background: linear-gradient(90deg, #60df78, #27c759 29px, #999 29px); }

.ribbon { height: 59px; flex: none; display: flex; background: #f7f7f7; border-bottom: 1px solid #adadad; padding-left: 3px; }
.tool { flex-direction: column; justify-content: flex-start; padding-top: 4px; position: relative; text-align: center; line-height: 11px; }
.tool > span { padding-top: 2px; }
.tool .ar { position: absolute; bottom: 4px; }
.w22 { width: 22px; }
.w24 { width: 24px; }
.w30 { width: 30px; }
.w41 { width: 41px; }
.w44 { width: 44px; }
.exit { background: linear-gradient(#b1b1b1 48px, #f7f7f7 48px); border: 1px solid #c5c5c5; border-bottom: 0; padding-top: 3px; }
.on { background: #b1b1b1; border-left: 1px solid #888; }
.rule { border-left: 1px solid #ddd; }
.shapes { width: 100px; display: grid; grid-template-columns: 26px 26px 27px 16px; grid-template-rows: 19px 19px 19px; margin-left: 1px; padding-left: 2px; border-left: 1px solid #ddd; border-right: 1px solid #ddd; }
.shapes button { justify-content: flex-start; gap: 4px; }
.list { width: 92px; display: grid; grid-template-rows: 19px 19px 19px; padding-left: 3px; border-right: 1px solid #ddd; }
.list button { justify-content: flex-start; gap: 3px; }
.list .ar { margin-left: auto; margin-right: 2px; }

.work { flex: 1; min-height: 0; display: grid; grid-template-columns: 145px 1fr 17px; grid-template-rows: 16px 1fr; }
.canvas { grid-area: 1 / 1 / 3 / 4; min-height: 0; background:
  linear-gradient(180deg, transparent 56%, #fdfdfe 80%),
  radial-gradient(ellipse 24% 24% at 13% 53%, #dfe3ed 0%, #dfe3ed00 100%),
  radial-gradient(ellipse 36% 66% at 84% 26%, #d9dce9 0%, #dde0ebd0 40%, #e2e5ee00 100%),
  radial-gradient(ellipse 40% 34% at 100% 50%, #dfe2ec 0%, #dfe2ec00 100%),
  linear-gradient(90deg, #fdfdfe 70%, #f0f1f6 100%); }
.scene { width: 100%; height: 100%; }
.cross { fill: none; stroke: #777; }
.points { font: 11px "Liberation Serif", "Noto Sans CJK SC", serif; fill: #2522e6; }
.axis { font: 7px "Liberation Sans", sans-serif; }
.axis.y { fill: #579b5c; }
.axis.x { fill: #e25b5b; }
.view { font: bold 9px "Liberation Mono", "Noto Sans CJK SC", monospace; }

.tabs { grid-area: 1 / 1 / 2 / 3; justify-self: start; display: flex; z-index: 1; }
.tabs button { padding: 0 3px; background: #d1d1d1; border-right: 1px solid #999; border-bottom: 1px solid #aaa; }
.tabs button:nth-child(-n+7) { width: 28px; padding: 0; }
.tabs .active { background: #f7f7f7; border-bottom-color: #f7f7f7; }

.side { grid-area: 2 / 1 / 3 / 2; min-height: 0; position: relative; background: #f7f7f7; border-right: 1px solid #bbb; border-left: 1px solid #ddd; display: flex; flex-direction: column; }
.grip { height: 17px; flex: none; display: flex; align-items: center; justify-content: center; border-bottom: 1px solid #ccc; border-top: 2px solid #d9e0e4; }
.grip i, .handle i { width: 5px; height: 5px; border: 1px solid #aaa; border-radius: 50%; background: #ddd; }
.sidetabs { height: 19px; flex: none; display: flex; background: #d1d1d1; position: relative; }
.sidetabs > button { width: 26px; border-right: 1px solid #aaa; }
.sidetabs > .active { background: #f7f7f7; }
.sidetabs .last { width: 25px; border: 0; }
.scroll { position: absolute; right: 1px; bottom: 0; display: flex; width: 23px; height: 12px; background: #fff; }
.scroll button { flex: 1; font: 9px/11px "DejaVu Sans", sans-serif; color: #000; }
.filter { height: 18px; flex: none; display: flex; align-items: center; margin: 0 2px 0 1px; border: 1px solid #ddd; padding-left: 2px; }
.filter svg { width: 15px; height: 15px; }
.filter input { flex: 1; height: 100%; }
.tree { list-style: none; margin: 0; padding: 0; overflow: hidden; }
.tree li { height: 16px; display: flex; align-items: center; gap: 3px; padding-left: 19px; white-space: nowrap; position: relative; }
.tree .root { padding-left: 2px; gap: 2px; }
.tree .child { padding-left: 36px; }
.tree .closed::before, .tree .open::before { content: ""; position: absolute; left: 7px; top: 5px; border: 3px solid transparent; border-left: 4px solid #555; border-right: 0; }
.tree .open::before { left: 5px; top: 6px; border: 3px solid transparent; border-top: 4px solid #555; border-bottom: 0; }
.tree .off { color: #999; }
.tree .off svg { filter: grayscale(1); opacity: .5; }
.tree .rollback { border-top: 2px solid #b2b1cb; }
.handle { position: absolute; left: 100%; top: 294px; width: 7px; height: 30px; display: flex; align-items: center; justify-content: center; background: #f7f7f7; border: 1px solid #bbb; border-left: 0; z-index: 2; }

.hud { grid-area: 2 / 2 / 3 / 3; align-self: start; display: flex; gap: 5px; padding: 4px 0 0 328px; }
.hud .drop { gap: 4px; color: #777; }
.wincontrols { grid-area: 1 / 2 / 3 / 4; align-self: start; justify-self: end; display: flex; gap: 7px; padding: 5px 5px 0 0; }
.wincontrols svg { width: 12px; height: 12px; }
.taskpane { grid-area: 2 / 3 / 3 / 4; align-self: start; margin-top: 21px; border: 1px solid #aaa; border-right: 0; background: #d1d1d1; }
.taskpane button { width: 100%; height: 18px; border-bottom: 1px solid #aaa; }
.taskpane button:last-child { border-bottom: 0; }
.taskpane .active { background: #fff; }
```
